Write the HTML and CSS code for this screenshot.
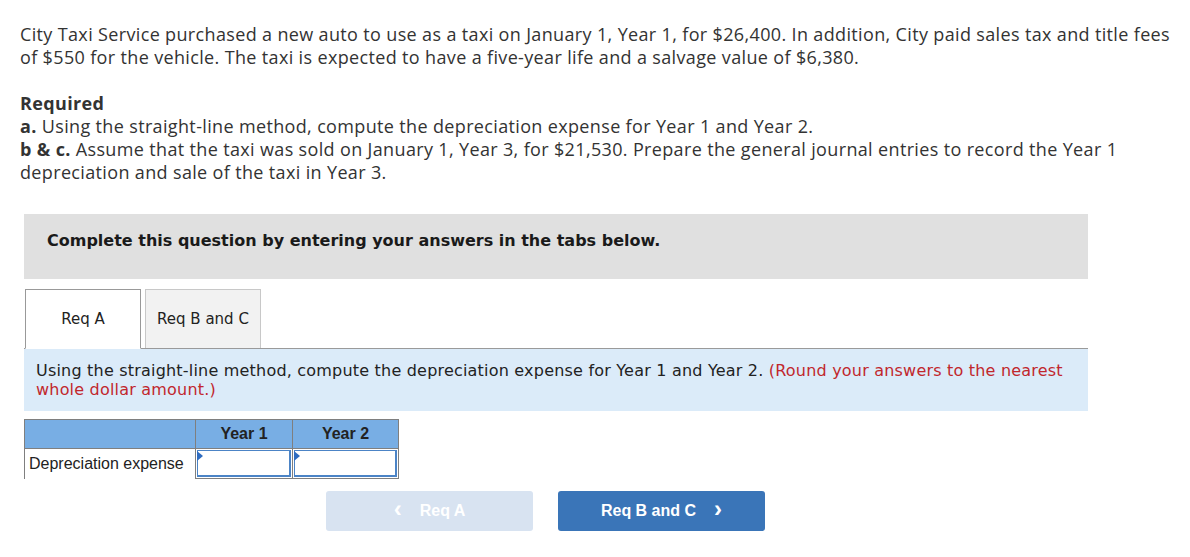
FILE: index.html
```html
<!DOCTYPE html>
<html>
<head>
<meta charset="utf-8">
<link rel="stylesheet" href="styles.css">
</head>
<body>
<div class="page">
  <p class="intro">City Taxi Service purchased a new auto to use as a taxi on January 1, Year 1, for $26,400. In addition, City paid sales tax and title fees of $550 for the vehicle. The taxi is expected to have a five-year life and a salvage value of $6,380.</p>
  <div class="required">
    <div class="req-title">Required</div>
    <div><b>a.</b> Using the straight-line method, compute the depreciation expense for Year 1 and Year 2.</div>
    <div><b>b &amp; c.</b> Assume that the taxi was sold on January 1, Year 3, for $21,530. Prepare the general journal entries to record the Year 1 depreciation and sale of the taxi in Year 3.</div>
  </div>
  <div class="panel">
    <div class="banner">Complete this question by entering your answers in the tabs below.</div>
    <div class="tabs">
      <div class="tab active">Req A</div>
      <div class="tab">Req B and C</div>
    </div>
    <div class="instr">Using the straight-line method, compute the depreciation expense for Year 1 and Year 2. <span class="red">(Round your answers to the nearest whole dollar amount.)</span></div>
    <table class="grid">
      <tr class="head"><th class="lbl"></th><th>Year 1</th><th>Year 2</th></tr>
      <tr><td class="lbl">Depreciation expense</td><td class="inp"><div class="box"></div></td><td class="inp"><div class="box"></div></td></tr>
    </table>
    <div class="nav">
      <button class="btn prev"><span class="chev">&lsaquo;</span>Req A</button>
      <button class="btn next">Req B and C<span class="chev r">&rsaquo;</span></button>
    </div>
  </div>
</div>
</body>
</html>
```
FILE: styles.css
```css
* { box-sizing: border-box; }
body { margin: 0; background: #fff; }
.page { padding: 23px 10px 0 20px; font-family: "Open Sans", "Lato", sans-serif; font-size: 18px; letter-spacing: 0.35px; color: #333; }
.intro { margin: 0; line-height: 23px; }
.required { margin-top: 23px; line-height: 23px; }
.req-title { font-weight: bold; }
.required b { font-weight: bold; }
.panel { margin: 30px 0 0 4px; width: 1064px; letter-spacing: 0; }
.banner { background: #e0e0e0; height: 65px; padding: 17px 0 0 23px; font-family: "DejaVu Sans", Verdana, sans-serif; font-weight: bold; font-size: 16px; color: #1a1a1a; }
.tabs { display: flex; gap: 4px; margin-top: 10px; padding-left: 1px; }
.tab { width: 116px; height: 59px; display: flex; align-items: center; justify-content: center; font-family: "DejaVu Sans", Verdana, sans-serif; font-size: 15px; color: #222; background: #f2f2f2; border: 1px solid #c8c8c8; border-bottom: none; }
.tab.active { background: #fff; border: 1px solid #999; border-bottom: 1px solid #fff; margin-bottom: -1px; height: 60px; position: relative; z-index: 1; }
.instr { background: #dbebf9; border-top: 1px solid #9a9a9a; height: 63px; padding: 12px 12px 0 12px; font-family: "DejaVu Sans", Verdana, sans-serif; font-size: 16px; letter-spacing: 0.2px; line-height: 19px; color: #222; }
.red { color: #c1272d; }
.grid { margin-top: 8px; border-collapse: collapse; font-family: "Liberation Sans", Arial, sans-serif; font-size: 16px; color: #222; }
.grid th { background: #78aee4; height: 29px; font-weight: bold; border: 1px solid #7f7f7f; padding: 0; }
.grid th:nth-child(2) { width: 97px; }
.grid th:nth-child(3) { width: 106px; }
.grid th.lbl { width: 171px; border-right: 1px solid #7f7f7f; }
.grid td.lbl { height: 29px; padding: 0 4px; border-left: 1px solid #7f7f7f; white-space: nowrap; }
.grid td.inp { border: 1px solid #7f7f7f; padding: 1px; }
.box { position: relative; height: 27px; border: 2px solid #4c84c6; border-top-width: 1px; border-left-width: 1px; background: #fff; }
.box::before { content: ""; position: absolute; left: -1px; top: 0; border-top: 5px solid transparent; border-bottom: 5px solid transparent; border-left: 6px solid #2f6cc0; }
.nav { display: flex; gap: 25px; margin: 12px 0 0 302px; }
.btn { width: 207px; height: 40px; border: none; border-radius: 3px; font-family: "Liberation Sans", Arial, sans-serif; font-weight: bold; font-size: 16px; color: #fff; display: flex; align-items: center; justify-content: center; padding: 0; }
.prev { background: #d8e3f1; }
.next { background: #3a75b8; }
.chev { font-size: 24px; font-weight: bold; line-height: 1; margin-right: 18px; position: relative; top: -2px; }
.chev.r { margin: 0 0 0 18px; }
```
